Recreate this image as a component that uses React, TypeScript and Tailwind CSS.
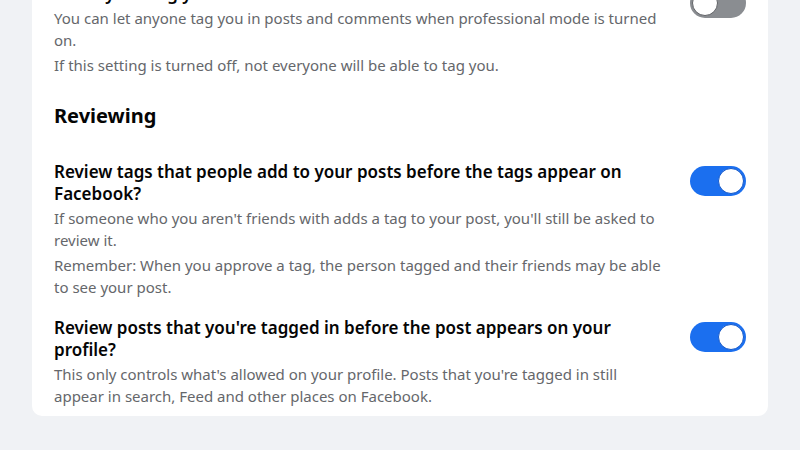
import React from "react";

type Setting = {
  title: string;
  lines: string[];
  on: boolean;
};

const Toggle = ({ on }: { on: boolean }) => {
  return (
    <div
      className={
        on
          ? "mt-[5px] flex h-[30px] w-[56px] shrink-0 items-center justify-end rounded-full bg-[#1b6fef] px-[2px]"
          : "mt-[5px] flex h-[30px] w-[56px] shrink-0 items-center justify-start rounded-full bg-[#8a8d91] px-[2px]"
      }
    >
      <div
        className={
          on
            ? "h-[26px] w-[26px] rounded-full border border-[#1458c9] bg-white"
            : "h-[26px] w-[26px] rounded-full border border-[#606266] bg-white"
        }
      />
    </div>
  );
};

const SettingRow = ({ setting }: { setting: Setting }) => {
  return (
    <div className="flex items-start gap-5">
      <div className="w-[616px]">
        <h3 className="text-[17px] font-semibold leading-[22px] text-[#050505]">
          {setting.title}
        </h3>
        <div className="mt-[2px] flex flex-col gap-[3px]">
          {setting.lines.map((line) => (
            <p key={line} className="text-[15px] leading-[22px] text-[#65676b]">
              {line}
            </p>
          ))}
        </div>
      </div>
      <Toggle on={setting.on} />
    </div>
  );
};

const tagging: Setting = {
  title: "Let anyone tag you",
  lines: [
    "You can let anyone tag you in posts and comments when professional mode is turned on.",
    "If this setting is turned off, not everyone will be able to tag you.",
  ],
  on: false,
};

const reviewing: Setting[] = [
  {
    title: "Review tags that people add to your posts before the tags appear on Facebook?",
    lines: [
      "If someone who you aren't friends with adds a tag to your post, you'll still be asked to review it.",
      "Remember: When you approve a tag, the person tagged and their friends may be able to see your post.",
    ],
    on: true,
  },
  {
    title: "Review posts that you're tagged in before the post appears on your profile?",
    lines: [
      "This only controls what's allowed on your profile. Posts that you're tagged in still appear in search, Feed and other places on Facebook.",
    ],
    on: true,
  },
];

export default function App() {
  return (
    <div
      className="h-[450px] overflow-hidden bg-[#f0f2f5] px-8"
      style={{ fontFamily: '"Noto Sans", "Open Sans", Arial, sans-serif' }}
    >
      <div className="-mt-[17px] rounded-b-[10px] bg-white px-[22px] pb-[9px]">
        <SettingRow setting={tagging} />
        <h2 className="mt-[26px] text-[20px] font-bold leading-[28px] text-[#050505]">
          Reviewing
        </h2>
        <div className="mt-[31px] flex flex-col gap-[19px]">
          {reviewing.map((s) => (
            <SettingRow key={s.title} setting={s} />
          ))}
        </div>
      </div>
    </div>
  );
}
